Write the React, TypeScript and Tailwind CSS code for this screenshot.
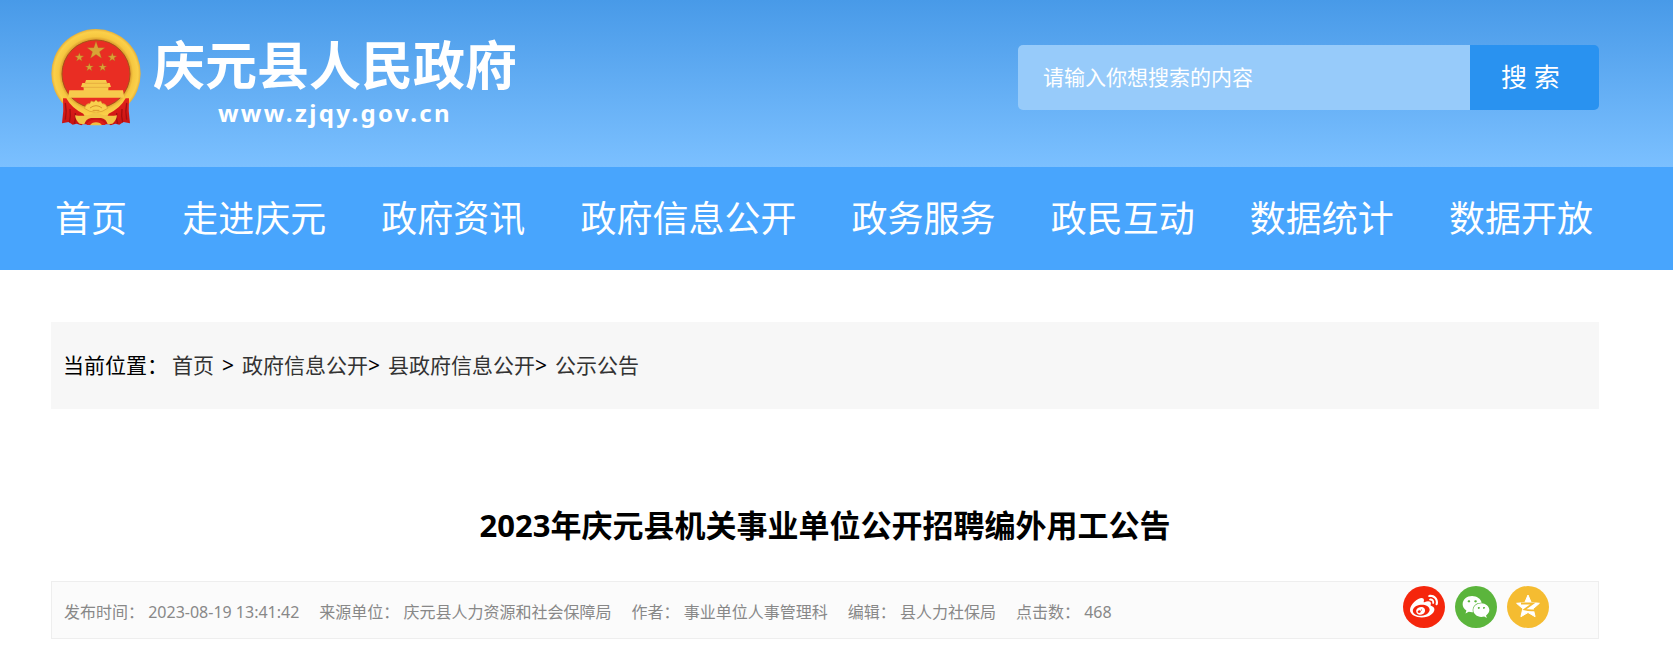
import { FaWeibo, FaWeixin } from 'react-icons/fa'

const NAV_ITEMS = ['首页', '走进庆元', '政府资讯', '政府信息公开', '政务服务', '政民互动', '数据统计', '数据开放']

const META_ITEMS = [
  { label: '发布时间：', value: '2023-08-19 13:41:42' },
  { label: '来源单位：', value: '庆元县人力资源和社会保障局' },
  { label: '作者：', value: '事业单位人事管理科' },
  { label: '编辑：', value: '县人力社保局' },
  { label: '点击数：', value: '468' }
]

// Five-pointed star as an svg points list
function starPoints(cx: number, cy: number, r: number, inner = 0.4) {
  const pts: string[] = []
  for (let i = 0; i < 10; i++) {
    const a = -Math.PI / 2 + (i * Math.PI) / 5
    const d = i % 2 === 0 ? r : r * inner
    pts.push(`${(cx + d * Math.cos(a)).toFixed(1)},${(cy + d * Math.sin(a)).toFixed(1)}`)
  }
  return pts.join(' ')
}

function Emblem() {
  return (
    <svg viewBox="33 42 270 291" className="w-[90px] h-[97px] shrink-0" aria-hidden="true">
      <defs>
        <radialGradient id="ring" cx="0.5" cy="0.5" r="0.5">
          <stop offset="0.76" stopColor="#d99a2c" />
          <stop offset="0.83" stopColor="#f6c740" />
          <stop offset="0.94" stopColor="#fbd04a" />
          <stop offset="1" stopColor="#e6b03a" />
        </radialGradient>
        <linearGradient id="drape" x1="0" y1="0" x2="0" y2="1">
          <stop offset="0" stopColor="#e3221b" />
          <stop offset="1" stopColor="#c81212" />
        </linearGradient>
      </defs>
      <circle cx="168" cy="176" r="134" fill="url(#ring)" />
      <circle cx="168" cy="177" r="102" fill="#e92d23" stroke="#a8501a" strokeWidth="3" />
      <g fill="#d9a436" stroke="#b0681f" strokeWidth="1">
        <polygon points={starPoints(168, 107, 28)} />
        <polygon points={starPoints(118, 127, 14)} />
        <polygon points={starPoints(217, 127, 14)} />
        <polygon points={starPoints(148, 157, 13)} />
        <polygon points={starPoints(188, 157, 13)} />
      </g>
      {/* gate tower */}
      <path d="M138 195h60l3 9h8l4 12h-8v10h44l4 22H84l4-22h43v-10h-8l4-12h8z" fill="#f7ca4c" />
      <path d="M134 205h70M128 217h80" stroke="#e0a03a" strokeWidth="2" />
      {/* drapes */}
      <path d="M69 250l10 0q16 30 51 46 8 12 2 28l-8 7-14-5-12 3-12-8-20 4q6-36 3-75z" fill="url(#drape)" />
      <path d="M267 250l-10 0q-16 30-51 46-8 12-2 28l8 7 14-5 12 3 12-8 20 4q-6-36-3-75z" fill="url(#drape)" />
      <path d="M76 264q5 26 0 50M90 282q3 22-2 40M106 294q2 18-3 32M260 264q-5 26 0 50M246 282q-3 22 2 40M230 294q-2 18 3 32" stroke="#a30e10" strokeWidth="4" fill="none" />
      <path d="M112 308h112l-8 20h-96z" fill="#c71414" />
      {/* gear and ribbon bow */}
      <path d="M133 280q6-16 16-14l5-8 8 3 6-6 6 6 8-3 5 8q10-2 16 14-16 12-35 12t-35-12z" fill="#f9d04e" stroke="#d8952a" strokeWidth="2" />
      <path d="M150 279q18-14 36 0M158 286h20" stroke="#d8952a" strokeWidth="3" fill="none" />
      <path d="M105 301q24 4 44-2l19-8 19 8q20 6 44 2-2 16-14 25l-14 2q-4-16-20-19h-30q-16 3-20 19l-14-2q-12-9-14-25z" fill="#f1c446" />
      <path d="M139 330q6-16 29-16t29 16z" fill="#dc1e18" />
      <path d="M150 331q5-9 18-9t18 9z" fill="#efc044" />
    </svg>
  )
}

function QzoneIcon() {
  return (
    <svg viewBox="0 0 42 42" className="size-[42px]" aria-hidden="true">
      <polygon points={starPoints(21, 21, 12, 0.46)} fill="#fff" stroke="#fff" strokeWidth="1" strokeLinejoin="round" />
      <path d="M14 17.500h12L17.500 23.500q6 1.500 13 .3" fill="none" stroke="#f5bc31" strokeWidth="1.800" />
    </svg>
  )
}

export default function App() {
  return (
    <div className="min-h-screen bg-white text-black font-['Noto_Sans','Noto_Sans_CJK_SC',sans-serif]">
      <header className="bg-linear-to-b from-[#489ae8] to-[#7bc0ff] pl-[51px] pr-[74px]">
        <div className="flex items-start justify-between h-[167px]">
          <a href="#" className="flex items-start gap-3 pt-[29px] text-white">
            <Emblem />
            <div className="flex flex-col items-center">
              <span className="text-[52px] leading-[76px] font-bold font-['Liberation_Sans','Noto_Sans_CJK_SC',sans-serif]">庆元县人民政府</span>
              <span className="text-2xl leading-4 font-bold tracking-widest">www.zjqy.gov.cn</span>
            </div>
          </a>
          <form className="flex w-[581px] h-[65px] mt-[45px] rounded-[5px] overflow-hidden" onSubmit={(e) => e.preventDefault()}>
            <input
              type="text"
              aria-label="搜索内容"
              placeholder="请输入你想搜索的内容"
              className="flex-1 min-w-0 px-[25px] bg-[#97cbfa] text-[21px] text-white placeholder:text-white outline-none"
            />
            <button type="submit" className="w-[129px] pr-2 bg-[#2992f0] text-white text-[26px]">
              搜 索
            </button>
          </form>
        </div>
      </header>

      <nav className="bg-[#48a5fd] pl-[55px] pr-[80px]">
        <ul className="flex items-center justify-between h-[103px]">
          {NAV_ITEMS.map((item) => (
            <li key={item}>
              <a href="#" className="text-4xl text-white whitespace-nowrap">{item}</a>
            </li>
          ))}
        </ul>
      </nav>

      <main className="pl-[51px] pr-[74px] pt-[52px]">
        {/* Breadcrumb */}
        <div className="flex items-center h-[87px] px-3 bg-[#f7f7f7] text-[21px]">
          <span className="mr-1">当前位置：</span>
          <a href="#" className="text-[#333]">首页</a>
          <span className="ml-2 mr-2">&gt;</span>
          <a href="#" className="text-[#333]">政府信息公开</a>
          <span className="mr-2">&gt;</span>
          <a href="#" className="text-[#333]">县政府信息公开</a>
          <span className="mr-2">&gt;</span>
          <a href="#" className="text-[#333]">公示公告</a>
        </div>

        <h1 className="mt-[92px] text-[31px] leading-12 font-bold text-center">2023年庆元县机关事业单位公开招聘编外用工公告</h1>

        {/* Article info */}
        <div className="flex items-start justify-between h-[58px] mt-8 pl-3 pr-[49px] border border-[#eee] bg-[#fbfbfb]">
          <div className="flex gap-5 text-base leading-[60px] text-[#888]">
            {META_ITEMS.map(({ label, value }) => (
              <span key={label}>{label} {value}</span>
            ))}
          </div>
          <div className="flex gap-[10px] pt-1">
            <a href="#" aria-label="微博" className="flex items-center justify-center size-[42px] rounded-full bg-[#f5260c] text-white">
              <FaWeibo size={28} />
            </a>
            <a href="#" aria-label="微信" className="flex items-center justify-center size-[42px] rounded-full bg-[#5bb53c] text-white">
              <FaWeixin size={28} />
            </a>
            <a href="#" aria-label="QQ空间" className="size-[42px] rounded-full bg-[#f5bc31]">
              <QzoneIcon />
            </a>
          </div>
        </div>
      </main>
    </div>
  )
}
